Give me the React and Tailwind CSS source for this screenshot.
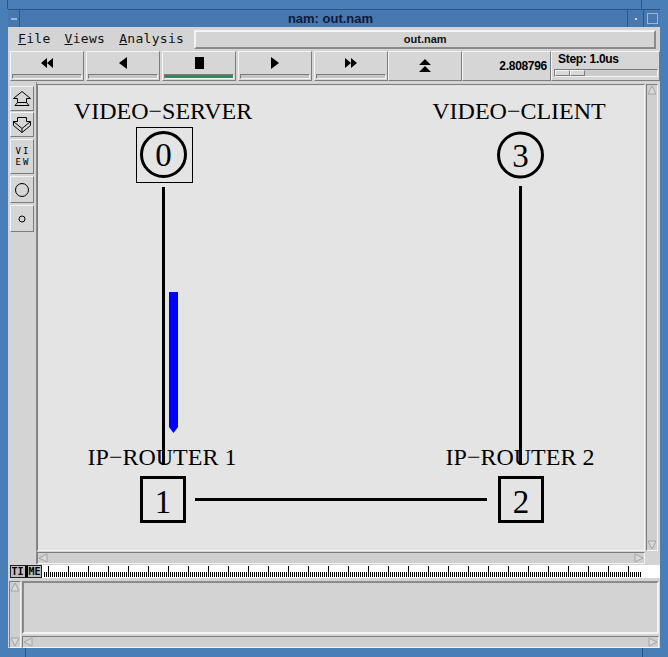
import React from "react";

const raised = "border border-t-[#f4f4f4] border-l-[#f4f4f4] border-b-[#7c7c7c] border-r-[#7c7c7c]";
const sunken = "border border-t-[#7c7c7c] border-l-[#7c7c7c] border-b-[#f4f4f4] border-r-[#f4f4f4]";

const Tri = ({ dir, size = 10 }) => {
  const s = size;
  const pts = {
    up: `1,${s - 1} ${s / 2},1 ${s - 1},${s - 1}`,
    down: `1,1 ${s / 2},${s - 1} ${s - 1},1`,
    left: `${s - 1},1 1,${s / 2} ${s - 1},${s - 1}`,
    right: `1,1 ${s - 1},${s / 2} 1,${s - 1}`,
  }[dir];
  return (
    <svg width={s} height={s} className="block">
      <polygon points={pts} fill="#dadada" stroke="#a4a4a4" strokeWidth="1" />
    </svg>
  );
};

const TransportButton = ({ children, active }) => (
  <div className={`w-[74px] h-full flex flex-col ${raised} bg-[#d6d6d6]`}>
    <div className="flex-1 flex items-center justify-center">{children}</div>
    <div className={`h-[5px] mx-[1px] mb-[1px] ${sunken} ${active ? "bg-[#2f8a5a]" : "bg-[#c4c4c4]"}`} />
  </div>
);

const Glyph = ({ d, w = 14 }) => (
  <svg width={w} height="12" viewBox={`0 0 ${w} 12`} className="block">
    <path d={d} fill="#000" />
  </svg>
);

const ToolBtn = ({ children, h }) => (
  <div className={`w-[24px] ${h} ${raised} bg-[#d6d6d6] flex items-center justify-center`}>{children}</div>
);

const Ruler = () => {
  const ticks = [];
  for (let x = 2, i = 0; x < 600; x += 2, i++) {
    const major = i % 10 === 2;
    ticks.push(<line key={x} x1={x + 0.5} x2={x + 0.5} y1={major ? 1 : 7} y2={12} stroke="#000" strokeWidth="1" />);
  }
  return (
    <svg width="616" height="13" className="block">
      {ticks}
    </svg>
  );
};

const Network = () => (
  <svg width="607" height="466" className="block" style={{ fontFamily: '"Liberation Serif", "Times New Roman", serif' }}>
    <g fontSize="24" textAnchor="middle" fill="#000">
      <text x="125" y="34">VIDEO−SERVER</text>
      <text x="481" y="34">VIDEO−CLIENT</text>
      <text x="124" y="380">IP−ROUTER 1</text>
      <text x="482" y="380">IP−ROUTER 2</text>
    </g>
    <line x1="125.5" y1="102" x2="125.5" y2="380" stroke="#000" strokeWidth="3" />
    <line x1="482.5" y1="101" x2="482.5" y2="380" stroke="#000" strokeWidth="3" />
    <line x1="157" y1="414.5" x2="449" y2="414.5" stroke="#000" strokeWidth="3" />
    <rect x="98.5" y="42.5" width="56" height="55" fill="none" stroke="#000" strokeWidth="1" />
    <circle cx="125.5" cy="69.5" r="22" fill="none" stroke="#000" strokeWidth="3" />
    <circle cx="482.5" cy="70" r="22" fill="none" stroke="#000" strokeWidth="3" />
    <rect x="103.5" y="392.5" width="43" height="44" fill="none" stroke="#000" strokeWidth="3" />
    <rect x="461.5" y="392.5" width="43" height="44" fill="none" stroke="#000" strokeWidth="3" />
    <g fontSize="33" textAnchor="middle" fill="#000">
      <text x="125.5" y="81">0</text>
      <text x="482.5" y="82">3</text>
      <text x="125" y="428">1</text>
      <text x="483" y="428">2</text>
    </g>
    <polygon points="131,207 140,207 140,342 135.5,348 131,342" fill="#0000ff" />
  </svg>
);

export default function App() {
  return (
    <div className="w-[668px] h-[657px] bg-[#4a7eb7] flex flex-col pt-[9px] pb-[9px] pl-[8px] pr-[8px] relative" style={{ fontFamily: '"Liberation Sans", Arial, sans-serif' }}>
      <div className="absolute left-[7px] top-0 w-px h-[9px] bg-[#2b5687]" />
      <div className="absolute right-[26px] top-0 w-px h-[9px] bg-[#2b5687]" />
      <div className="absolute left-[25px] bottom-0 w-px h-[9px] bg-[#2b5687]" />
      <div className="absolute right-[25px] bottom-0 w-px h-[9px] bg-[#2b5687]" />

      {/* title bar */}
      <div className="h-[18px] flex items-stretch bg-[#4779b0] border-t border-[#2b5687]">
        <div className="w-[12px] border-r border-[#2b5687] flex items-center justify-center">
          <div className="w-[6px] h-[2px] bg-[#9ab8da]" />
        </div>
        <div className="flex-1 flex items-center justify-center text-[13px] font-bold text-[#0c1a3a] pl-[14px]">
          nam: out.nam
        </div>
        <div className="w-[16px] border-l border-[#2b5687] flex items-center justify-center">
          <div className="w-[2px] h-[2px] bg-[#c8d8ec]" />
        </div>
        <div className="w-[17px] border-l border-[#2b5687] flex items-center justify-center">
          <div className="w-[11px] h-[11px] border border-[#9ab8da]" />
        </div>
      </div>

      {/* client area */}
      <div className="flex-1 bg-[#d4d4d4] flex flex-col pl-px">
        {/* menu */}
        <div className="h-[24px] flex items-center text-[13px] text-[#111] tracking-[0.3px]" style={{ fontFamily: '"DejaVu Sans Mono", monospace' }}>
          <span className="ml-[9px]"><u>F</u>ile</span>
          <span className="ml-[14px]"><u>V</u>iews</span>
          <span className="ml-[14px]"><u>A</u>nalysis</span>
          <div className={`ml-[10px] w-[462px] h-[19px] border-2 border-t-[#f4f4f4] border-l-[#f4f4f4] border-b-[#8a8a8a] border-r-[#8a8a8a] flex items-center justify-center text-[11px] font-bold tracking-normal`} style={{ fontFamily: '"Liberation Sans", Arial, sans-serif' }}>
            out.nam
          </div>
        </div>

        {/* transport */}
        <div className="h-[31px] flex items-stretch gap-[2px] pl-[1px] pb-[1px]">
          <TransportButton><Glyph d="M7 1 L1 6 L7 11Z M13 1 L7 6 L13 11Z" /></TransportButton>
          <TransportButton><Glyph w={10} d="M9 0 L1 6 L9 12Z" /></TransportButton>
          <TransportButton active><Glyph w={10} d="M1 0 H10 V12 H1Z" /></TransportButton>
          <TransportButton><Glyph w={10} d="M1 0 L9 6 L1 12Z" /></TransportButton>
          <TransportButton><Glyph d="M1 1 L7 6 L1 11Z M7 1 L13 6 L7 11Z" /></TransportButton>
          <div className={`w-[74px] ${raised} bg-[#d6d6d6] flex items-center justify-center -ml-[2px]`}>
            <svg width="12" height="14" className="block">
              <path d="M6 0 L12 6 H0Z M6 7 L12 13 H0Z" fill="#000" />
            </svg>
          </div>
          <div className={`w-[89px] -ml-[2px] ${raised} bg-[#d6d6d6] flex items-center justify-end pr-[3px] text-[12px] font-bold tracking-tight`}>
            2.808796
          </div>
          <div className={`flex-1 -ml-[2px] ${raised} bg-[#d6d6d6] flex flex-col pl-[2px] pr-[1px]`}>
            <div className="text-[12px] font-bold tracking-tight h-[17px] leading-[15px] pl-[4px]">Step: 1.0us</div>
            <div className={`h-[8px] ${sunken} bg-[#cbcbcb] flex`}>
              <div className={`w-[15px] ${raised} bg-[#d8d8d8]`} />
              <div className={`w-[15px] ${raised} bg-[#d8d8d8]`} />
            </div>
          </div>
        </div>

        {/* main */}
        <div className="h-[482px] flex">
          <div className="w-[28px] border-r border-[#8a8a8a] flex flex-col items-center pt-[4px] gap-[1px] pr-[1px]">
            <ToolBtn h="h-[25px]">
              <svg width="20" height="18" className="block">
                <path d="M10 1.5 L18.5 8.5 H14.5 V12.5 H5.5 V8.5 H1.5Z M3 15.5 H17" fill="none" stroke="#000" strokeWidth="1" />
                <path d="M5.5 12.5 L3 15.5 M14.5 12.5 L17 15.5" fill="none" stroke="#000" strokeWidth="1" />
              </svg>
            </ToolBtn>
            <ToolBtn h="h-[25px]">
              <svg width="20" height="18" className="block">
                <path d="M5.5 1.5 H14.5 V5.5 H18.5 L10 12.5 L1.5 5.5 H5.5Z" fill="none" stroke="#000" strokeWidth="1" />
                <path d="M1.5 5.5 V9.5 L10 16.5 L18.5 9.5 V5.5 M10 12.5 V16.5" fill="none" stroke="#000" strokeWidth="1" />
              </svg>
            </ToolBtn>
            <ToolBtn h="h-[35px] mt-[1px]">
              <div className="text-[9px] leading-[11px] text-center tracking-[2px] pl-[2px]" style={{ fontFamily: '"DejaVu Sans Mono", monospace' }}>
                <div>VI</div>
                <div>EW</div>
              </div>
            </ToolBtn>
            <ToolBtn h="h-[27px] mt-[1px]">
              <svg width="16" height="16" className="block"><circle cx="8" cy="8" r="6.5" fill="none" stroke="#000" /></svg>
            </ToolBtn>
            <ToolBtn h="h-[27px] mt-[1px]">
              <svg width="10" height="10" className="block"><circle cx="5" cy="5" r="3" fill="none" stroke="#000" /></svg>
            </ToolBtn>
          </div>
          <div className="flex-1 flex flex-col pt-[2px]">
            <div className="flex h-[467px]">
              <div className={`w-[608px] ${sunken} bg-[#e4e4e4] overflow-hidden`}>
                <Network />
              </div>
              <div className={`w-[12px] ml-[1px] ${sunken} bg-[#cfcfcf] flex flex-col justify-between`}>
                <Tri dir="up" />
                <Tri dir="down" />
              </div>
            </div>
            <div className="flex h-[12px] mt-[1px] mb-[1px]">
              <div className={`w-[608px] ${sunken} bg-[#cfcfcf] flex justify-between`}>
                <Tri dir="left" />
                <Tri dir="right" />
              </div>
            </div>
          </div>
        </div>

        {/* time ruler */}
        <div className="h-[15px] flex items-center pl-[1px]">
          <div className="w-[32px] h-[13px] border border-[#222] bg-[#bdbdbd] flex items-center justify-center text-[10px] font-bold leading-none" style={{ fontFamily: '"DejaVu Sans Mono", monospace' }}>
            <span>TI</span>
            <span className="w-[3px] h-[11px] bg-black mx-[1px]" />
            <span>ME</span>
          </div>
          <div className="flex-1 h-[13px] bg-white overflow-hidden">
            <Ruler />
          </div>
        </div>

        {/* bottom panel */}
        <div className="flex-1 flex pt-[2px] pr-px">
          <div className={`w-[12px] ${sunken} bg-[#cfcfcf] flex flex-col justify-between`}>
            <Tri dir="up" />
            <Tri dir="down" />
          </div>
          <div className="flex-1 flex flex-col ml-px">
            <div className="flex-1 border-2 border-t-[#8a8a8a] border-l-[#8a8a8a] border-b-[#f4f4f4] border-r-[#f4f4f4] bg-[#d3d3d3]" />
            <div className={`h-[12px] mt-[2px] ${sunken} bg-[#cfcfcf] flex justify-between`}>
              <Tri dir="left" />
              <Tri dir="right" />
            </div>
          </div>
        </div>
      </div>
    </div>
  );
}
